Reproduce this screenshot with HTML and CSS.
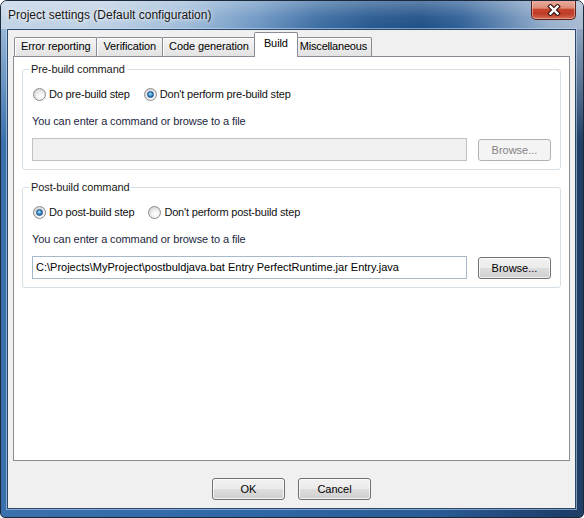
FILE: index.html
```html
<!DOCTYPE html>
<html>
<head>
<meta charset="utf-8">
<title>Project settings</title>
<link rel="stylesheet" href="styles.css">
</head>
<body>
<div class="window">
  <div class="titlebar">
    <span class="title">Project settings (Default configuration)</span>
    <div class="close">
      <svg width="14" height="12" viewBox="0 0 14 12">
        <path d="M3.5 2.5 L10.5 9.5 M10.5 2.5 L3.5 9.5" stroke="#3a1814" stroke-width="4.6" stroke-linecap="square" fill="none"/>
        <path d="M3.5 2.5 L10.5 9.5 M10.5 2.5 L3.5 9.5" stroke="#ffffff" stroke-width="2.4" stroke-linecap="square" fill="none"/>
      </svg>
    </div>
  </div>
  <div class="frame">
    <div class="client">
      <div class="tabs">
        <div class="tab">Error reporting</div>
        <div class="tab">Verification</div>
        <div class="tab">Code generation</div>
        <div class="tab active">Build</div>
        <div class="tab">Miscellaneous</div>
      </div>
      <div class="panel">
        <fieldset class="group">
          <legend>Pre-build command</legend>
          <div class="radios">
            <label class="option"><span class="radio"></span>Do pre-build step</label>
            <label class="option"><span class="radio checked"></span>Don't perform pre-build step</label>
          </div>
          <div class="hint">You can enter a command or browse to a file</div>
          <div class="field-row">
            <div class="textbox disabled"></div>
            <div class="button disabled">Browse...</div>
          </div>
        </fieldset>
        <fieldset class="group second">
          <legend>Post-build command</legend>
          <div class="radios">
            <label class="option"><span class="radio checked"></span>Do post-build step</label>
            <label class="option"><span class="radio"></span>Don't perform post-build step</label>
          </div>
          <div class="hint">You can enter a command or browse to a file</div>
          <div class="field-row">
            <div class="textbox">C:\Projects\MyProject\postbuldjava.bat Entry PerfectRuntime.jar Entry.java</div>
            <div class="button">Browse...</div>
          </div>
        </fieldset>
      </div>
      <div class="footer">
        <div class="button">OK</div>
        <div class="button">Cancel</div>
      </div>
    </div>
  </div>
</div>
</body>
</html>
```

FILE: styles.css
```css
html, body {
  margin: 0;
  padding: 0;
}
body {
  width: 584px;
  height: 518px;
  overflow: hidden;
  background: #ffffff;
  font-family: "Liberation Sans", Arial, sans-serif;
  font-size: 11px;
  color: #000000;
}
.window {
  box-sizing: border-box;
  width: 584px;
  height: 518px;
  border: 1px solid #1b293b;
  border-radius: 7px 7px 5px 5px;
  overflow: hidden;
  display: flex;
  flex-direction: column;
  background:
    linear-gradient(180deg, rgba(196, 214, 234, 0.85) 0px, rgba(196, 214, 234, 0) 140px),
    linear-gradient(90deg, #3a71ad 0%, #3a6fab 3%, #3068a6 40%, #2a5b95 75%, #1d3d69 97%, #223f66 100%);
}
.titlebar {
  flex: none;
  height: 28px;
  display: flex;
  align-items: flex-start;
  padding-left: 7px;
  background:
    linear-gradient(180deg, rgba(255, 255, 255, 0.28) 0%, rgba(255, 255, 255, 0.05) 60%, rgba(255, 255, 255, 0) 100%),
    linear-gradient(90deg, #c2d3e5 0%, #bccfe3 18%, #9ebbd9 32%, #6e97c3 44%, #3f6fa5 54%, #275990 63%, #1f4f87 72%, #2f5f97 79%, #6489b4 87%, #97afcb 94%, #a8bbd2 100%);
}
.title {
  margin-top: 7px;
  font-size: 12px;
  line-height: 14px;
  color: #161616;
  white-space: nowrap;
  text-shadow: 0 0 6px rgba(255, 255, 255, 0.9), 0 0 3px rgba(255, 255, 255, 0.7);
}
.close {
  margin-left: auto;
  margin-right: 7px;
  margin-top: -1px;
  width: 45px;
  height: 20px;
  box-sizing: border-box;
  border: 1px solid #5a211b;
  border-top: none;
  border-radius: 0 0 5px 5px;
  background: linear-gradient(180deg, #ebb0a2 0%, #dd8d78 42%, #c7452f 50%, #bf3c28 72%, #d46b52 100%);
  box-shadow: inset 0 0 0 1px rgba(255, 220, 210, 0.45);
  display: flex;
  align-items: center;
  justify-content: center;
}
.close svg {
  display: block;
}
.frame {
  flex: 1;
  display: flex;
  padding: 0 7px 8px 6px;
  min-height: 0;
}
.client {
  flex: 1;
  display: flex;
  flex-direction: column;
  background: #f0f0f0;
  border: 1px solid #2a4769;
  box-shadow: 0 0 0 1px rgba(200, 222, 245, 0.55);
  min-height: 0;
}
.tabs {
  flex: none;
  height: 26px;
  display: flex;
  align-items: flex-end;
  padding: 0 6px;
}
.tab {
  box-sizing: border-box;
  height: 19px;
  padding: 0 6px;
  border: 1px solid #898c95;
  border-bottom: none;
  border-radius: 2px 2px 0 0;
  background: linear-gradient(180deg, #f4f4f4 0%, #ececec 50%, #e2e2e2 100%);
  box-shadow: inset 1px 1px 0 rgba(255, 255, 255, 0.9);
  line-height: 17px;
  white-space: nowrap;
  color: #000000;
  letter-spacing: -0.1px;
}
.tab + .tab {
  margin-left: -1px;
}
.tab.active {
  height: 25px;
  margin: 0 -2px -1px -2px;
  padding: 0 9px;
  background: #ffffff;
  box-shadow: none;
  position: relative;
  z-index: 1;
  line-height: 21px;
}
.tab:last-child {
  padding: 0 4px;
  letter-spacing: -0.2px;
}
.panel {
  flex: 1;
  margin: 0 5px;
  border: 1px solid #898c95;
  background: #ffffff;
  padding: 5px 8px 0;
  display: flex;
  flex-direction: column;
  min-height: 0;
}
.group {
  margin: 0;
  padding: 0 9px 8px;
  border: 1px solid #d5dfe5;
  border-radius: 3px;
  min-width: 0;
}
.group.second {
  margin-top: 10px;
}
.group legend {
  padding: 0 2px;
  margin-left: -3px;
  line-height: 14px;
  color: #1a1a1a;
  letter-spacing: -0.1px;
}
.radios {
  display: flex;
  align-items: center;
  gap: 14px;
  height: 15px;
  margin-top: 11px;
  padding-left: 1px;
}
.option {
  display: flex;
  align-items: center;
  gap: 3px;
  line-height: 15px;
  white-space: nowrap;
  color: #111111;
  letter-spacing: -0.18px;
}
.radio {
  width: 13px;
  height: 13px;
  box-sizing: border-box;
  border-radius: 50%;
  border: 1px solid #8b8c8d;
  background: radial-gradient(circle at 60% 65%, #ffffff 0%, #f2f2f2 35%, #d6d6d6 75%, #cbcbcb 100%);
  display: flex;
  align-items: center;
  justify-content: center;
  flex: none;
}
.radio.checked::after {
  content: "";
  width: 7px;
  height: 7px;
  box-sizing: border-box;
  border-radius: 50%;
  border: 1px solid #1b4f85;
  background: radial-gradient(circle at 45% 40%, #bfe4fb 0%, #59a8e0 35%, #1c6cb0 70%, #134f8a 100%);
}
.hint {
  margin-top: 12px;
  line-height: 14px;
  color: #1b2740;
  white-space: nowrap;
  letter-spacing: -0.1px;
}
.field-row {
  display: flex;
  align-items: center;
  gap: 11px;
  margin-top: 10px;
}
.textbox {
  flex: 1;
  min-width: 0;
  height: 23px;
  box-sizing: border-box;
  border: 1px solid #a7b8ca;
  background: #ffffff;
  padding: 0 3px;
  line-height: 21px;
  white-space: nowrap;
  overflow: hidden;
  color: #000000;
}
.textbox.disabled {
  background: #f0f0f0;
  border-color: #bfc2c5;
}
.button {
  flex: none;
  width: 73px;
  height: 22px;
  box-sizing: border-box;
  border: 1px solid #707070;
  border-radius: 3px;
  background: linear-gradient(180deg, #f2f2f2 0%, #ebebeb 48%, #dddddd 52%, #cfcfcf 100%);
  box-shadow: inset 0 0 0 1px rgba(255, 255, 255, 0.75);
  text-align: center;
  line-height: 20px;
  color: #000000;
}
.button.disabled {
  border-color: #adb2b5;
  background: #f4f4f4;
  box-shadow: none;
  color: #838383;
}
.footer {
  flex: none;
  height: 47px;
  box-sizing: border-box;
  padding-top: 17px;
  display: flex;
  justify-content: center;
  align-items: flex-start;
  gap: 13px;
}
```
